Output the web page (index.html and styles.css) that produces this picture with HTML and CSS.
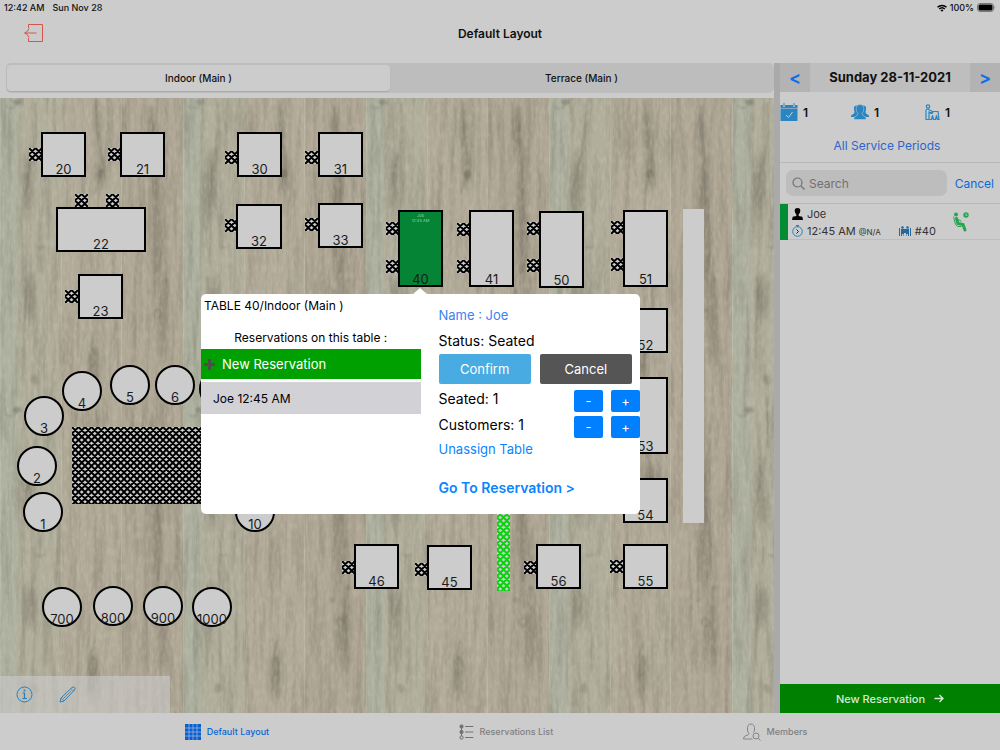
FILE: index.html
```html
<!DOCTYPE html>
<html lang="en">
    <head>
        <meta charset="UTF-8" />
        <meta name="viewport" content="width=device-width, initial-scale=1.0" />
        <title>Default Layout</title>
        <link rel="stylesheet" href="styles.css">
    </head>
    <body>
        <div class="status-bar">
            <span>12:42 AM</span>
            <span>Sun Nov 28</span>
            <span class="status-right">
                <svg width="10" height="8" viewBox="0 0 20 15" fill="none" stroke="#000" stroke-width="3">
                    <path d="M1 6 A13 13 0 0 1 19 6" />
                    <path d="M4.500 9.500 A8 8 0 0 1 15.500 9.500" />
                    <path d="M7 12 L10 15 L13 12 A4.500 4.500 0 0 0 7 12 Z" fill="#000" stroke="none" />
                </svg>
                <span>100%</span>
                <svg width="19" height="9" viewBox="0 0 19 9">
                    <rect x="0.500" y="0.500" width="16" height="8" rx="2.500" fill="none" stroke="#777" />
                    <rect x="1.500" y="1.500" width="14" height="6" rx="1.500" />
                    <path d="M17.500 3 Q19 4.500 17.500 6 Z" fill="#777" />
                </svg>
            </span>
        </div>

        <header class="nav">
            <button class="exit" aria-label="Exit">
                <svg width="20" height="20" viewBox="0 0 20 20" fill="none" stroke="#d2564c" stroke-width="1">
                    <path d="M4.500 5 V1.500 H18.500 V18.500 H4.500 V15" />
                    <path d="M12.500 10 H1 M5 5.500 Q4 9 0.500 10 Q4 11 5 14.500" />
                </svg>
            </button>
            <h1>Default Layout</h1>
        </header>

        <main class="main">
            <section class="left">
                <div class="rooms">
                    <button class="room active">Indoor (Main )</button>
                    <button class="room">Terrace (Main )</button>
                </div>

                <div class="floor" id="floor">
                    <svg class="wood" aria-hidden="true">
                        <defs>
                            <filter id="soft" x="-100%" y="-20%" width="300%" height="140%">
                                <feGaussianBlur stdDeviation="3 6" />
                            </filter>
                            <filter id="soft2" x="-50%" y="-20%" width="200%" height="140%">
                                <feGaussianBlur stdDeviation="0.800" />
                            </filter>
                            <filter id="grain" x="0" y="0" width="100%" height="100%" color-interpolation-filters="sRGB">
                                <feTurbulence type="fractalNoise" baseFrequency="0.16 0.014" numOctaves="4" seed="8" />
                                <feColorMatrix values="0 0 0 0 0.300  0 0 0 0 0.290  0 0 0 0 0.240  0.500 0 0 0 -0.200" />
                            </filter>
                            <filter id="grain-light" x="0" y="0" width="100%" height="100%" color-interpolation-filters="sRGB">
                                <feTurbulence type="fractalNoise" baseFrequency="0.35 0.12" numOctaves="2" seed="3" />
                                <feColorMatrix values="0 0 0 0 0.850  0 0 0 0 0.840  0 0 0 0 0.780  0 0.500 0 0 -0.200" />
                            </filter>
                            <pattern id="planks" width="183" height="308" patternUnits="userSpaceOnUse">
                                <rect width="61" height="308" fill="#b0ad9b" />
                                <rect x="61" width="61" height="308" fill="#b2aa98" />
                                <rect x="122" width="61" height="308" fill="#afa694" />
                                <rect width="18" height="308" fill="#adb09f" />
                                <g filter="url(#soft)" fill="#6f6a5c" opacity="0.450">
                                    <ellipse cx="28" cy="86" rx="5" ry="34" />
                                    <ellipse cx="101" cy="75" rx="5" ry="18" />
                                    <ellipse cx="93" cy="270" rx="5" ry="26" />
                                    <ellipse cx="98" cy="30" rx="3" ry="26" />
                                    <ellipse cx="156" cy="120" rx="5" ry="70" />
                                    <ellipse cx="163" cy="225" rx="5" ry="42" />
                                    <ellipse cx="30" cy="200" rx="5" ry="22" />
                                    <ellipse cx="152" cy="34" rx="4" ry="20" />
                                </g>
                                <g filter="url(#soft2)" fill="none" stroke="#5c5a4e" opacity="0.500">
                                    <path d="M35 5 Q38 35 32 60 Q26 72 28 88" />
                                    <path d="M24 178 Q27 200 24 225 V260" />
                                    <path d="M96 2 Q97 40 104 70 Q101 82 94 96" />
                                    <path d="M94 234 Q88 262 90 285" />
                                    <path d="M151 8 Q156 60 158 116 Q166 140 157 175" />
                                    <path d="M5 8 Q12 14 18 5" />
                                    <path d="M36 148 Q40 152 45 148" />
                                    <circle cx="165" cy="182" r="2" />
                                    <circle cx="150" cy="194" r="2" />
                                    <circle cx="157" cy="216" r="4" />
                                    <ellipse cx="17" cy="4" rx="4" ry="2" fill="#77786a" />
                                    <ellipse cx="101" cy="76" rx="3" ry="4" fill="#6f6a5c" />
                                    <ellipse cx="35" cy="282" rx="4" ry="5" fill="#8b8776" stroke="none" />
                                    <ellipse cx="93" cy="260" rx="3" ry="9" />
                                </g>
                                <path d="M0.500 0 V308 M61.500 0 V308 M121.500 0 V308" stroke="#c1bdac" stroke-width="1" opacity="0.500" />
                            </pattern>
                        </defs>
                        <rect width="100%" height="100%" fill="url(#planks)" />
                        <rect width="100%" height="100%" filter="url(#grain)" />
                        <rect width="100%" height="100%" filter="url(#grain-light)" />
                    </svg>

                    <div class="tools">
                        <button aria-label="Info">
                            <svg width="17" height="17" viewBox="0 0 17 17" fill="none" stroke="#2a7fb8">
                                <circle cx="8.500" cy="8.500" r="7.500" />
                                <path d="M6.500 7 H8.500 V12 M6.500 12.500 H11" stroke-width="1.200" />
                                <circle cx="8.500" cy="4.500" r="1" fill="#2a7fb8" stroke="none" />
                            </svg>
                        </button>
                        <button aria-label="Edit">
                            <svg width="17" height="17" viewBox="0 0 17 17" fill="none" stroke="#2a7fb8">
                                <path d="M1 16 L2 12 L13 1.500 Q14.500 0.500 15.500 1.500 Q16.500 2.500 15.500 4 L5 15 Z" />
                                <path d="M2 12 L5 15 M12 2.500 L14.500 5 M4 13 L12.500 4.500" stroke-width="0.700" />
                            </svg>
                        </button>
                    </div>

                    <div class="popover" role="dialog" aria-label="Table 40">
                        <div class="pop-left">
                            <h2>TABLE 40/Indoor (Main )</h2>
                            <p>Reservations on this table :</p>
                            <button class="pop-new">
                                <svg width="11" height="11" viewBox="0 0 11 11" stroke="#4d4d4d" stroke-width="3">
                                    <path d="M5.500 0 V11 M0 5.500 H11" />
                                </svg>
                                New Reservation
                            </button>
                            <button class="pop-item">Joe 12:45 AM</button>
                        </div>
                        <div class="pop-right">
                            <a href="#" class="soft-link">Name : Joe</a>
                            <div>Status: Seated</div>
                            <div class="pop-actions">
                                <button class="confirm">Confirm</button>
                                <button class="dismiss">Cancel</button>
                            </div>
                            <div class="counter">
                                <span>Seated: 1</span>
                                <button aria-label="Fewer seated">-</button>
                                <button aria-label="More seated">+</button>
                            </div>
                            <div class="counter">
                                <span>Customers: 1</span>
                                <button aria-label="Fewer customers">-</button>
                                <button aria-label="More customers">+</button>
                            </div>
                            <a href="#" class="unassign">Unassign Table</a>
                            <a href="#" class="goto">Go To Reservation &gt;</a>
                        </div>
                    </div>
                </div>
            </section>

            <aside class="side">
                <div class="date">
                    <button aria-label="Previous day">&lt;</button>
                    <h2>Sunday 28-11-2021</h2>
                    <button aria-label="Next day">&gt;</button>
                </div>
                <div class="stats">
                    <span>
                        <svg width="18" height="18" viewBox="0 0 18 18" fill="#2a85c2">
                            <path d="M0.500 2 H3 V4 H5 V2 H13 V4 H15 V2 H17.500 V5 H0.500 Z" />
                            <path d="M3.500 0 H4.500 V3.500 H3.500 Z M13.500 0 H14.500 V3.500 H13.500 Z" />
                            <rect x="0.500" y="5.500" width="17" height="12.500" />
                            <path d="M6 12 L8.500 14.500 L12.500 9" fill="none" stroke="#ccc" />
                        </svg>
                        1
                    </span>
                    <span>
                        <svg width="18" height="16" viewBox="0 0 18 16" fill="#2a85c2">
                            <path d="M6 1.500 Q3 1 2.800 4 L3.500 8 Q3.500 9.500 0 11.500 V13 H5 L8 10 Z" />
                            <path d="M12 1.500 Q15 1 15.200 4 L14.500 8 Q14.500 9.500 18 11.500 V13 H13 L10 10 Z" />
                            <path d="M9 0.500 Q13 0.500 12.800 5 Q12.700 8 11 9.500 Q11 11.500 15 13.500 V15.500 H3 V13.500 Q7 11.500 7 9.500 Q5.300 8 5.200 5 Q5 0.500 9 0.500 Z" stroke="#ccc" stroke-width="0.500" />
                        </svg>
                        1
                    </span>
                    <span>
                        <svg width="16" height="16" viewBox="0 0 16 16" fill="none" stroke="#2a85c2" stroke-width="1.200">
                            <circle cx="4" cy="2.500" r="1.700" />
                            <path d="M2 15.500 V6 Q3.500 4 5.500 6 L8.500 7.500 L8 9 L5 8 V15.500 M1.500 15.500 H5.500" />
                            <path d="M5.500 9 Q9 10 9 7.500 H14 L15 15.500 H13.500 L12.500 11.500 L11.500 15.500 H9.500 L8.500 11.500 L7.500 15.500 H5.500" />
                        </svg>
                        1
                    </span>
                </div>
                <a href="#" class="periods">All Service Periods</a>
                <div class="search-row">
                    <div class="search">
                        <label for="search" aria-label="Search">
                            <svg width="13" height="13" viewBox="0 0 13 13" fill="none" stroke="#717174" stroke-width="1.200">
                                <circle cx="5.500" cy="5.500" r="4.500" />
                                <path d="M9 9 L12.500 12.500" />
                            </svg>
                        </label>
                        <input type="text" id="search" placeholder="Search">
                    </div>
                    <button>Cancel</button>
                </div>
                <div class="reservation">
                    <div class="res-info">
                        <div class="res-line">
                            <svg width="11" height="12" viewBox="0 0 11 12">
                                <path d="M5.500 0 Q8.500 0 8.300 3 Q8 5.500 6.700 6.300 V8 L10.300 8.700 L11 12 H0 L0.700 8.700 L4.300 8 V6.300 Q3 5.500 2.700 3 Q2.500 0 5.500 0 Z" />
                            </svg>
                            <span>Joe</span>
                        </div>
                        <div class="res-line">
                            <svg width="11" height="12" viewBox="0 0 11 12" fill="none" stroke="#2a7fb8">
                                <circle cx="5.500" cy="6.500" r="4.800" />
                                <path d="M4 0.500 H7 M5.500 0.500 V2" />
                                <path d="M4.500 4.500 L6.500 6.500 L4.500 8.500" stroke="#222" />
                            </svg>
                            <span>12:45 AM <small>@N/A</small></span>
                            <svg class="seats" width="12" height="10" viewBox="0 0 12 10" fill="#23699b">
                                <circle cx="3.500" cy="1.500" r="1.300" />
                                <circle cx="8.500" cy="1.500" r="1.300" />
                                <path d="M0 2 H1 V10 H0 Z M11 2 H12 V10 H11 Z M2 3 H10 V10 H9 V8 H7.500 V10 H7 V7 H5 V10 H4.500 V8 H3 V10 H2 Z" />
                            </svg>
                            <span>#40</span>
                        </div>
                    </div>
                    <svg width="16" height="20" viewBox="0 0 16 20" fill="none" stroke="#25a550" stroke-linecap="round">
                        <circle cx="3" cy="2.500" r="2" fill="#25a550" stroke="none" />
                        <circle cx="13" cy="3" r="2.700" fill="#25a550" stroke="none" />
                        <path d="M13 1.500 V3.500 H14" stroke="#ccc" stroke-width="0.700" />
                        <path d="M3.500 6.500 L5 11.500 L10 12.500 L12 18" stroke-width="3" />
                        <path d="M0.700 5 L2.500 12.500 L5 14.500 H8 M5 7.500 L8 9" stroke-width="1" />
                    </svg>
                </div>
                <button class="new-reservation">New Reservation
                    <svg width="10" height="9" viewBox="0 0 10 9" fill="none" stroke="#d8ead8" stroke-width="1.300">
                        <path d="M0.500 4.500 H9 M5.500 1 L9 4.500 L5.500 8" />
                    </svg>
                </button>
            </aside>
        </main>

        <nav class="tabs">
            <a href="#" class="tab selected">
                <svg width="16" height="16" viewBox="0 0 16 16" fill="#0a5fd0">
                    <rect width="16" height="16" />
                    <path d="M4 0 V16 M8 0 V16 M12 0 V16 M0 4 H16 M0 8 H16 M0 12 H16" stroke="#a9bfdc" stroke-width="0.700" />
                </svg>
                Default Layout
            </a>
            <a href="#" class="tab">
                <svg width="15" height="16" viewBox="0 0 15 16" fill="#727272" stroke="#727272">
                    <rect x="1" y="1" width="3" height="3" rx="1" />
                    <rect x="1" y="6.500" width="3" height="3" rx="1" />
                    <rect x="1" y="12" width="3" height="3" rx="1" fill="none" />
                    <path d="M6.500 2.500 H14 M6.500 8 H14 M6.500 13.500 H14" stroke-linecap="round" />
                    <path d="M2.500 4 V12" />
                </svg>
                Reservations List
            </a>
            <a href="#" class="tab">
                <svg width="18" height="18" viewBox="0 0 18 18" fill="none" stroke="#858585">
                    <path d="M9.500 16 H0.500 Q0.500 13.500 2.500 12.800 Q6 12 6 10.500 Q4.500 9 4.500 7 Q4 1 8 1 Q12 1 11.500 7 Q11.400 8.500 10.500 9.500" />
                    <circle cx="13" cy="13" r="3" />
                    <path d="M15.200 15.200 L17.500 17.500" />
                </svg>
                Members
            </a>
        </nav>

        <script src="floor.js"></script>
    </body>
</html>
```
FILE: styles.css
```css
* {
    box-sizing: border-box;
}

body {
    margin: 0;
    min-height: 100vh;
    display: flex;
    flex-direction: column;
    background: #ccc;
    color: #111;
    font-family: Inter, "Liberation Sans", sans-serif;
    font-size: 13px;
}

h1,
h2,
p {
    margin: 0;
    font-weight: normal;
}

button {
    border: none;
    padding: 0;
    background: none;
    color: inherit;
    font: inherit;
    cursor: pointer;
}

a {
    color: #0a84ff;
    text-decoration: none;
}

svg {
    display: block;
    flex: none;
}

/* top bars */
.status-bar {
    display: flex;
    align-items: center;
    gap: 8px;
    height: 15px;
    padding: 0 4px;
    font-size: 9px;
    font-weight: 500;
}

.status-right {
    display: flex;
    align-items: center;
    gap: 3px;
    margin-left: auto;
}

.nav {
    display: grid;
    grid-template-columns: 1fr auto 1fr;
    align-items: center;
    height: 48px;
    padding: 0 24px 12px;
}

.exit {
    justify-self: start;
}

.nav h1 {
    font-size: 12px;
    font-weight: 600;
}

/* main area */
.main {
    flex: 1;
    display: grid;
    grid-template-columns: 1fr 220px;
}

.left {
    display: flex;
    flex-direction: column;
    border-right: 6px solid #aaa;
}

.rooms {
    display: grid;
    grid-template-columns: 1fr 1fr;
    height: 30px;
    margin: 0 0 5px 6px;
    padding: 2px 1px;
    border-radius: 5px;
    background: #bdbdbd;
}

.room {
    border-radius: 4px;
    font-size: 10px;
    font-weight: 500;
}

.room.active {
    background: #ccc;
    box-shadow: 0 1px 1px #aaa;
}

.floor {
    flex: 1;
    position: relative;
    background: #b0a996;
}

.wood {
    position: absolute;
    width: 100%;
    height: 100%;
}

/* things placed on the floor */
.table {
    position: absolute;
    display: flex;
    flex-direction: column;
    justify-content: flex-end;
    align-items: center;
    border: 2px solid #000;
    background: #ccc;
    color: #1c1c1c;
    line-height: 12px;
    white-space: nowrap;
}

.table.round {
    border-radius: 50%;
}

.table.busy {
    justify-content: space-between;
    background: #048434;
}

.table small {
    color: #9ed0ae;
    font-size: 4px;
    line-height: 5px;
    padding-top: 1px;
}

.hatch {
    position: absolute;
    background: #ccc url("data:image/svg+xml,%3Csvg xmlns='http://www.w3.org/2000/svg' width='13' height='13' viewBox='0 0 4 4'%3E%3Cpath d='M-1 1L1-1M-1 3L3-1M-1 5L5-1M1 5L5 1M3 5L5 3M-1 3L1 5M-1 1L3 5M-1-1L5 5M1-1L5 3M3-1L5 1' stroke='%23000' stroke-width='.6'/%3E%3C/svg%3E");
}

.hatch.green {
    background-image: url("data:image/svg+xml,%3Csvg xmlns='http://www.w3.org/2000/svg' width='13' height='13' viewBox='0 0 4 4'%3E%3Cpath d='M-1 1L1-1M-1 3L3-1M-1 5L5-1M1 5L5 1M3 5L5 3M-1 3L1 5M-1 1L3 5M-1-1L5 5M1-1L5 3M3-1L5 1' stroke='%2306d40c' stroke-width='.6'/%3E%3C/svg%3E");
}

.wall {
    position: absolute;
    background: #ccc;
}

.tools {
    position: absolute;
    left: 0;
    bottom: 0;
    display: flex;
    gap: 26px;
    width: 170px;
    height: 37px;
    padding-left: 16px;
    background: rgba(204, 204, 204, 0.6);
}

/* table popover */
.popover {
    position: absolute;
    z-index: 2;
    left: 201px;
    top: 196px;
    display: grid;
    grid-template-columns: 1fr 1fr;
    width: 439px;
    height: 220px;
    border-radius: 5px;
    background: #fff;
    color: #000;
}

.popover::before {
    content: "";
    position: absolute;
    left: 212px;
    top: -6px;
    border: 7px solid transparent;
    border-top: none;
    border-bottom: 6px solid #fff;
}

.pop-left h2 {
    padding: 0 3px;
    font-size: 12px;
    line-height: 24px;
}

.pop-left p {
    padding: 10px 0 1px;
    font-size: 12px;
    line-height: 20px;
    text-align: center;
}

.pop-new,
.pop-item {
    display: flex;
    align-items: center;
    width: 100%;
    text-align: left;
}

.pop-new {
    gap: 7px;
    height: 30px;
    padding-left: 3px;
    background: #00a000;
    color: #fff;
}

.pop-item {
    height: 32px;
    margin-top: 3px;
    padding-left: 12px;
    background: #d1d1d6;
    font-size: 12px;
}

.pop-right {
    display: flex;
    flex-direction: column;
    padding: 8px 0 0 18px;
    font-size: 14px;
    line-height: 26px;
}

.pop-right .soft-link {
    color: #3c82f0;
    font-size: 13px;
}

.pop-actions {
    display: grid;
    grid-template-columns: 1fr 1fr;
    gap: 9px;
    padding: 0 8px 6px 0;
    font-size: 13px;
}

.pop-actions button {
    height: 30px;
    border-radius: 2px;
    color: #fff;
}

.confirm {
    background: #48abe2;
}

.dismiss {
    background: #555;
}

.counter {
    display: flex;
    gap: 8px;
    height: 26px;
    line-height: 18px;
}

.counter span {
    flex: 1;
}

.counter button {
    width: 29px;
    height: 22px;
    border-radius: 2px;
    background: #0080ff;
    color: #fff;
    font-size: 13px;
}

.unassign {
    font-size: 13px;
    line-height: 14px;
}

.goto {
    margin-top: 19px;
    font-weight: 600;
}

/* sidebar */
.side {
    display: flex;
    flex-direction: column;
}

.date {
    display: grid;
    grid-template-columns: 30px 1fr 30px;
    height: 29px;
    background: #bebebe;
    text-align: center;
}

.date h2 {
    font-size: 13px;
    font-weight: 700;
    line-height: 28px;
}

.date button {
    background: #b3b3b3;
    color: #0a6fe8;
    font-size: 18px;
    font-weight: 600;
}

.stats {
    display: grid;
    grid-template-columns: 71px 73px 1fr;
    height: 40px;
    font-size: 12px;
    font-weight: 600;
}

.stats span {
    display: flex;
    align-items: center;
    gap: 5px;
}

.periods {
    height: 31px;
    padding-right: 6px;
    color: #2b66cc;
    font-size: 12px;
    line-height: 28px;
    text-align: center;
    border-bottom: 1px solid #b8b8b8;
}

.search-row {
    display: flex;
    align-items: center;
    gap: 8px;
    height: 41px;
    padding: 0 6px;
    border-bottom: 1px solid #b8b8b8;
}

.search {
    flex: 1;
    display: flex;
    align-items: center;
    gap: 4px;
    height: 26px;
    padding: 0 6px;
    border-radius: 7px;
    background: #bdbdbd;
}

.search input {
    width: 100%;
    min-width: 0;
    padding: 0;
    border: none;
    outline: none;
    background: none;
    font: inherit;
    font-size: 12px;
}

.search input::placeholder {
    color: #717174;
    opacity: 1;
}

.search-row button {
    color: #0a6adc;
    font-size: 12px;
}

.reservation {
    display: flex;
    height: 36px;
    border-left: 8px solid #048c34;
    box-shadow: inset 0 -1px #bdbdbd;
}

.reservation > svg {
    margin: 8px 0 0 5px;
}

.res-info {
    width: 160px;
    padding: 1px 4px 0;
    color: #333;
    font-size: 11px;
}

.res-line {
    display: flex;
    align-items: center;
    gap: 4px;
    height: 17px;
    white-space: nowrap;
}

.res-line small {
    font-size: 8px;
}

.seats {
    margin-left: 14px;
}

.new-reservation {
    display: flex;
    justify-content: center;
    align-items: center;
    gap: 9px;
    height: 29px;
    margin-top: auto;
    background: #008000;
    color: #d8ead8;
    font-size: 11px;
    font-weight: 500;
}

/* bottom tabs */
.tabs {
    display: flex;
    justify-content: space-around;
    height: 37px;
    padding: 0 98px 0 90px;
}

.tab {
    display: flex;
    align-items: center;
    gap: 6px;
    color: #808080;
    font-size: 9px;
    font-weight: 500;
}

.tab.selected {
    color: #0a66d6;
}
```
FILE: floor.js
```javascript
// [number, left, top, width, height]
const tables = [
    [20, 41, 34, 45, 45],
    [21, 120, 34, 45, 45],
    [30, 237, 34, 45, 45],
    [31, 318, 34, 45, 45],
    [22, 56, 109, 90, 45],
    [32, 236, 106, 46, 45],
    [33, 318, 105, 45, 45],
    [23, 78, 176, 45, 45],
    [40, 398, 112, 45, 77],
    [41, 469, 112, 45, 77],
    [50, 539, 113, 45, 77],
    [51, 623, 112, 45, 77],
    [52, 623, 210, 45, 45],
    [53, 623, 279, 45, 77],
    [54, 623, 380, 45, 45],
    [46, 354, 446, 45, 45],
    [45, 427, 447, 45, 45],
    [56, 536, 446, 45, 45],
    [55, 623, 446, 45, 45],
];

// [number, left, top]
const stools = [
    [1, 23, 394],
    [2, 17, 348],
    [3, 24, 298],
    [4, 62, 273],
    [5, 110, 267],
    [6, 155, 267],
    ["", 199, 271],
    [10, 235, 394],
    [700, 42, 489],
    [800, 93, 488],
    [900, 143, 488],
    [1000, 192, 489],
];

// [left, top]
const chairs = [
    [29, 50], [108, 50], [225, 53], [305, 53], [75, 96], [106, 96],
    [225, 121], [305, 120], [65, 192], [386, 124], [386, 162],
    [457, 125], [457, 162], [527, 124], [527, 161], [611, 123],
    [611, 160], [342, 463], [415, 465], [524, 463], [610, 462],
];

const floor = document.getElementById("floor");

function place(tag, className, left, top, width, height) {
    const el = document.createElement(tag);
    el.className = className;
    el.style.left = left + "px";
    el.style.top = top + "px";
    el.style.width = width + "px";
    el.style.height = height + "px";
    floor.appendChild(el);
    return el;
}

place("div", "hatch", 72, 329, 150, 77);
place("div", "hatch green", 497, 400, 13, 93);
place("div", "wall", 683, 111, 21, 314);

chairs.forEach(([left, top]) => place("div", "hatch", left, top, 13, 13));

tables.forEach(([number, left, top, width, height]) => {
    const el = place("button", "table", left, top, width, height);
    if (number === 40) {
        el.classList.add("busy");
        el.innerHTML = "<small>Joe<br>12:45 AM</small>";
    }
    el.append(number);
});

stools.forEach(([number, left, top]) => {
    place("button", "table round", left, top, 40, 40).append(number);
});
```
